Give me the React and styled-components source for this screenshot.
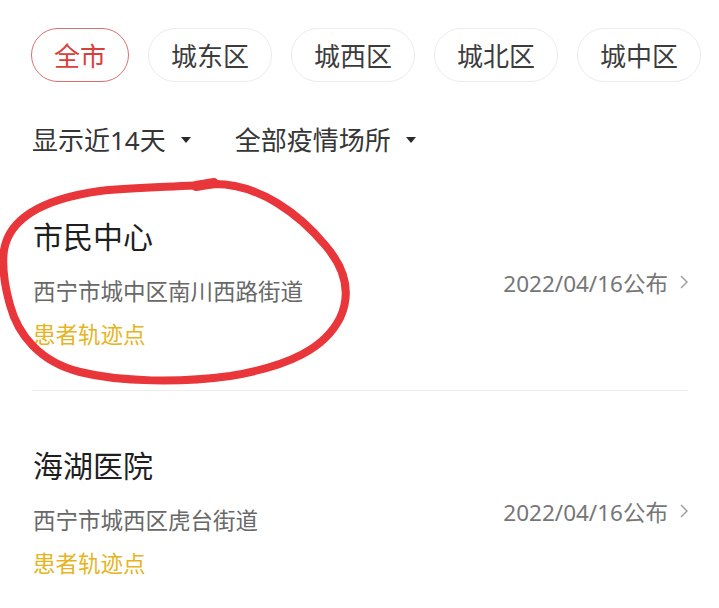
import React from 'react';
import styled, { createGlobalStyle } from 'styled-components';

const GlobalStyle = createGlobalStyle`
  html, body {
    margin: 0;
    padding: 0;
    background: #fff;
  }
  body {
    font-family: "Noto Sans", "Noto Sans CJK SC", sans-serif;
    -webkit-font-smoothing: antialiased;
  }
`;

const Page = styled.div`
  position: relative;
  width: 719px;
  height: 608px;
  overflow: hidden;
  padding: 28px 31px 0 32px;
  box-sizing: border-box;
`;

const ChipRow = styled.div`
  display: flex;
  gap: 19px;
  margin-left: -1px;
  flex-wrap: nowrap;
`;

const Chip = styled.div`
  flex: none;
  height: 54px;
  padding: 0 22px;
  border-radius: 27px;
  border: 1px solid ${props => (props.active ? '#dc7070' : '#ececec')};
  color: ${props => (props.active ? '#d8413b' : '#3c3c3c')};
  font-size: 26px;
  display: flex;
  align-items: center;
  box-sizing: border-box;
`;

const FilterRow = styled.div`
  display: flex;
  align-items: center;
  gap: 44px;
  margin-top: 43px;
`;

const Filter = styled.div`
  display: flex;
  align-items: center;
  gap: 15px;
  font-size: 26px;
  line-height: 30px;
  color: #353535;
`;

const Caret = styled.span`
  width: 0;
  height: 0;
  border-left: 5px solid transparent;
  border-right: 5px solid transparent;
  border-top: 6px solid #2a2a2a;
`;

const List = styled.div`
  margin-top: 7px;
`;

const Item = styled.div`
  display: flex;
  align-items: center;
  justify-content: space-between;
  padding: 57px 0 40px 1px;
  border-bottom: ${props => (props.last ? 'none' : '1px solid #ededed')};
`;

const Info = styled.div`
  display: flex;
  flex-direction: column;
`;

const Title = styled.div`
  font-size: 30px;
  line-height: 36px;
  color: #1f1f1f;
`;

const Address = styled.div`
  margin-top: 22px;
  font-size: 22.5px;
  line-height: 30px;
  color: #686868;
`;

const Tag = styled.div`
  margin-top: 13px;
  font-size: 22.5px;
  line-height: 30px;
  color: #e6b422;
`;

const Published = styled.div`
  display: flex;
  align-items: center;
  gap: 12px;
  font-size: 22.5px;
  color: #767676;
  margin-bottom: 5px;
`;

const Mark = styled.svg`
  position: absolute;
  left: 0;
  top: 0;
  pointer-events: none;
`;

const Chevron = () => (
  <svg width="8" height="14" viewBox="0 0 8 14">
    <path d="M1 1 L7 7 L1 13" fill="none" stroke="#9a9a9a" strokeWidth="1.4" />
  </svg>
);

const districts = ['全市', '城东区', '城西区', '城北区', '城中区'];

const places = [
  { name: '市民中心', address: '西宁市城中区南川西路街道', date: '2022/04/16' },
  { name: '海湖医院', address: '西宁市城西区虎台街道', date: '2022/04/16' }
];

export default function App() {
  return (
    <>
      <GlobalStyle />
      <Page>
        <ChipRow>
          {districts.map((d, i) => (
            <Chip key={d} active={i === 0}>
              {d}
            </Chip>
          ))}
        </ChipRow>
        <FilterRow>
          <Filter>
            显示近14天
            <Caret />
          </Filter>
          <Filter>
            全部疫情场所
            <Caret />
          </Filter>
        </FilterRow>
        <List>
          {places.map((p, i) => (
            <Item key={p.name} last={i === places.length - 1}>
              <Info>
                <Title>{p.name}</Title>
                <Address>{p.address}</Address>
                <Tag>患者轨迹点</Tag>
              </Info>
              <Published>
                {p.date}公布
                <Chevron />
              </Published>
            </Item>
          ))}
        </List>
        {/* hand-drawn red loop over the first item */}
        <Mark width="719" height="608" viewBox="0 0 719 608">
          <path
            d="M4 250 C10 215, 50 198, 100 191 C140 187, 180 187, 215 184 C260 184, 300 215, 325 245 C345 268, 352 292, 340 318 C325 348, 290 366, 230 376 C180 383, 120 382, 80 372 C40 362, 18 335, 10 305 C3 280, 2 265, 4 250"
            fill="none"
            stroke="#e8363a"
            strokeWidth="8"
            strokeLinecap="round"
            strokeLinejoin="round"
          />
          <path d="M196 186 L214 183" stroke="#e8363a" strokeWidth="10" strokeLinecap="round" />
        </Mark>
      </Page>
    </>
  );
}
